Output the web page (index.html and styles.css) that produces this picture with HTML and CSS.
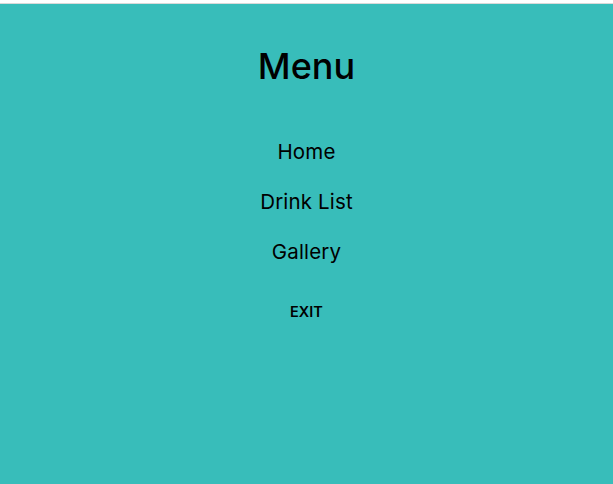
FILE: index.html
```html
<!DOCTYPE html>
<html>
<head>
<meta charset="utf-8">
<link rel="stylesheet" href="styles.css">
</head>
<body>
<div class="topbar"></div>
<main class="menu">
  <h1 class="title">Menu</h1>
  <nav class="links">
    <a class="link" href="#">Home</a>
    <a class="link" href="#">Drink List</a>
    <a class="link" href="#">Gallery</a>
  </nav>
  <button class="exit">EXIT</button>
</main>
</body>
</html>
```
FILE: styles.css
```css
html, body { margin: 0; padding: 0; height: 100%; }
body {
  background: #38bdba;
  font-family: "Inter", "Noto Sans", sans-serif;
  color: #000;
  display: flex;
  flex-direction: column;
}
.topbar {
  height: 3px;
  background: #fff;
  border-bottom: 1px solid #d9d9d9;
  flex: none;
}
.menu {
  display: flex;
  flex-direction: column;
  align-items: center;
  padding-top: 40px;
}
.title {
  margin: 0;
  font-size: 36px;
  font-weight: 500;
  line-height: 44px;
}
.links {
  display: flex;
  flex-direction: column;
  align-items: center;
  gap: 24px;
  margin-top: 51px;
}
.link {
  font-size: 20.5px;
  font-weight: 400;
  letter-spacing: 0.15px;
  line-height: 26px;
  color: #000;
  text-decoration: none;
}
.exit {
  margin-top: 37px;
  background: none;
  border: none;
  padding: 0;
  font-family: inherit;
  font-size: 14.5px;
  font-weight: 600;
  color: #000;
  line-height: 20px;
}
```
